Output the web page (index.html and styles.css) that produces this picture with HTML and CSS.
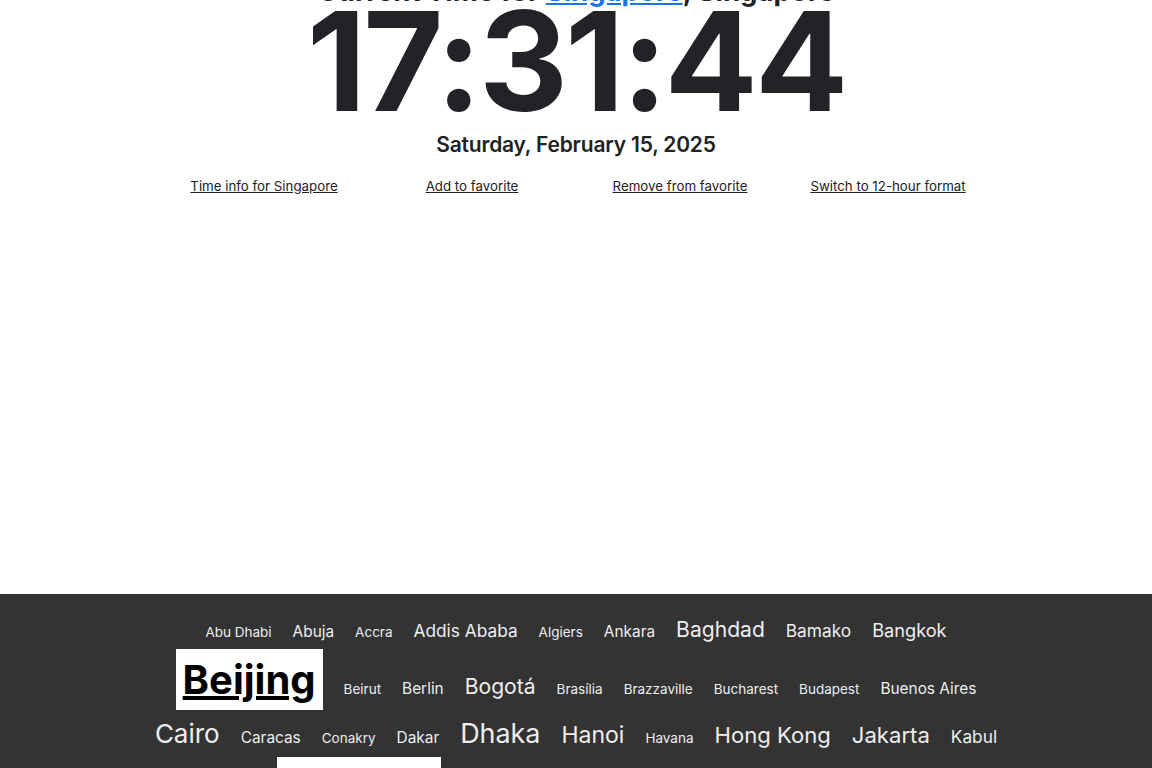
FILE: index.html
```html
<!DOCTYPE html>
<html lang="en">
<head>
    <meta charset="UTF-8">
    <meta name="viewport" content="width=device-width, initial-scale=1.0">
    <title>Current Time in Singapore</title>
    <link rel="stylesheet" href="styles.css">
</head>
<body>
    <main class="clock-page">
        <h1 class="title">Current Time for <a href="#">Singapore</a>, Singapore</h1>
        <div class="time">17:31:44</div>
        <div class="date">Saturday, February 15, 2025</div>

        <nav class="actions">
            <a href="#">Time info for Singapore</a>
            <a href="#">Add to favorite</a>
            <a href="#">Remove from favorite</a>
            <a href="#">Switch to 12-hour format</a>
        </nav>
    </main>

    <footer class="capitals">
        <ul class="city-cloud">
            <li class="s14"><a href="#">Abu Dhabi</a></li>
            <li class="s16"><a href="#">Abuja</a></li>
            <li class="s14"><a href="#">Accra</a></li>
            <li class="s18"><a href="#">Addis Ababa</a></li>
            <li class="s14"><a href="#">Algiers</a></li>
            <li class="s16"><a href="#">Ankara</a></li>
            <li class="s22"><a href="#">Baghdad</a></li>
            <li class="s18"><a href="#">Bamako</a></li>
            <li class="s19"><a href="#">Bangkok</a></li>
            <li class="current"><a href="#">Beijing</a></li>
            <li class="s14"><a href="#">Beirut</a></li>
            <li class="s16"><a href="#">Berlin</a></li>
            <li class="s22"><a href="#">Bogotá</a></li>
            <li class="s14"><a href="#">Brasília</a></li>
            <li class="s14"><a href="#">Brazzaville</a></li>
            <li class="s14"><a href="#">Bucharest</a></li>
            <li class="s14"><a href="#">Budapest</a></li>
            <li class="s16"><a href="#">Buenos Aires</a></li>
            <li class="s27"><a href="#">Cairo</a></li>
            <li class="s16"><a href="#">Caracas</a></li>
            <li class="s14"><a href="#">Conakry</a></li>
            <li class="s16"><a href="#">Dakar</a></li>
            <li class="s28"><a href="#">Dhaka</a></li>
            <li class="s24"><a href="#">Hanoi</a></li>
            <li class="s14"><a href="#">Havana</a></li>
            <li class="s23"><a href="#">Hong Kong</a></li>
            <li class="s23"><a href="#">Jakarta</a></li>
            <li class="s18"><a href="#">Kabul</a></li>
            <li class="s19"><a href="#">Kampala</a></li>
            <li class="current"><a href="#">Karachi</a></li>
            <li class="s16"><a href="#">Khartoum</a></li>
            <li class="s16"><a href="#">Kinshasa</a></li>
            <li class="s22"><a href="#">Kuala Lumpur</a></li>
            <li class="s16"><a href="#">Kyiv</a></li>
            <li class="s22"><a href="#">Lagos</a></li>
            <li class="s18"><a href="#">Lima</a></li>
        </ul>
    </footer>
</body>
</html>
```

FILE: styles.css
```css
body {
    margin: 0;
    font-family: Inter, 'Noto Sans', Arial, sans-serif;
    background: #fff;
    color: #212327;
}
/* page is shown scrolled a little, the heading sits just above the fold */
.clock-page {
    margin-top: -25px;
    min-height: 619px;
    text-align: center;
}
.title {
    margin: 0;
    font-size: 27.5px;
    line-height: 32px;
    font-weight: 700;
    color: #222;
}
.title a {
    color: #1a73e8;
}
.time {
    font-size: 138px;
    line-height: 108px;
    font-weight: 700;
    letter-spacing: -3px;
}
.date {
    margin-top: 15px;
    font-size: 21px;
    line-height: 30px;
    font-weight: 600;
    letter-spacing: -0.2px;
    color: #222;
}
.actions {
    display: grid;
    grid-template-columns: repeat(4, 1fr);
    width: 832px;
    margin: 16px auto 0;
    font-size: 13.3px;
    line-height: 20px;
}
.actions a {
    color: #222;
}
.capitals {
    background: #333;
    padding: 19px 0 40px;
}
.city-cloud {
    display: flex;
    flex-wrap: wrap;
    justify-content: center;
    align-items: baseline;
    gap: 3px 21px;
    width: 850px;
    margin: 0 auto;
    padding: 0;
    list-style: none;
}
.city-cloud li {
    padding: 4px 0;
    line-height: 1.2;
}
.city-cloud a {
    color: #eee;
    text-decoration: none;
}
.city-cloud .current {
    padding: 7px 7px 6px;
    background: #fff;
    font-size: 40px;
    font-weight: 700;
}
.city-cloud .current a {
    color: #000;
    text-decoration: underline;
}
.s14 { font-size: 13.5px; }
.s16 { font-size: 15.4px; }
.s18 { font-size: 17.3px; }
.s19 { font-size: 18.2px; }
.s22 { font-size: 21.1px; }
.s23 { font-size: 22.1px; }
.s24 { font-size: 23px; }
.s27 { font-size: 26px; }
.s28 { font-size: 26.9px; }
```
